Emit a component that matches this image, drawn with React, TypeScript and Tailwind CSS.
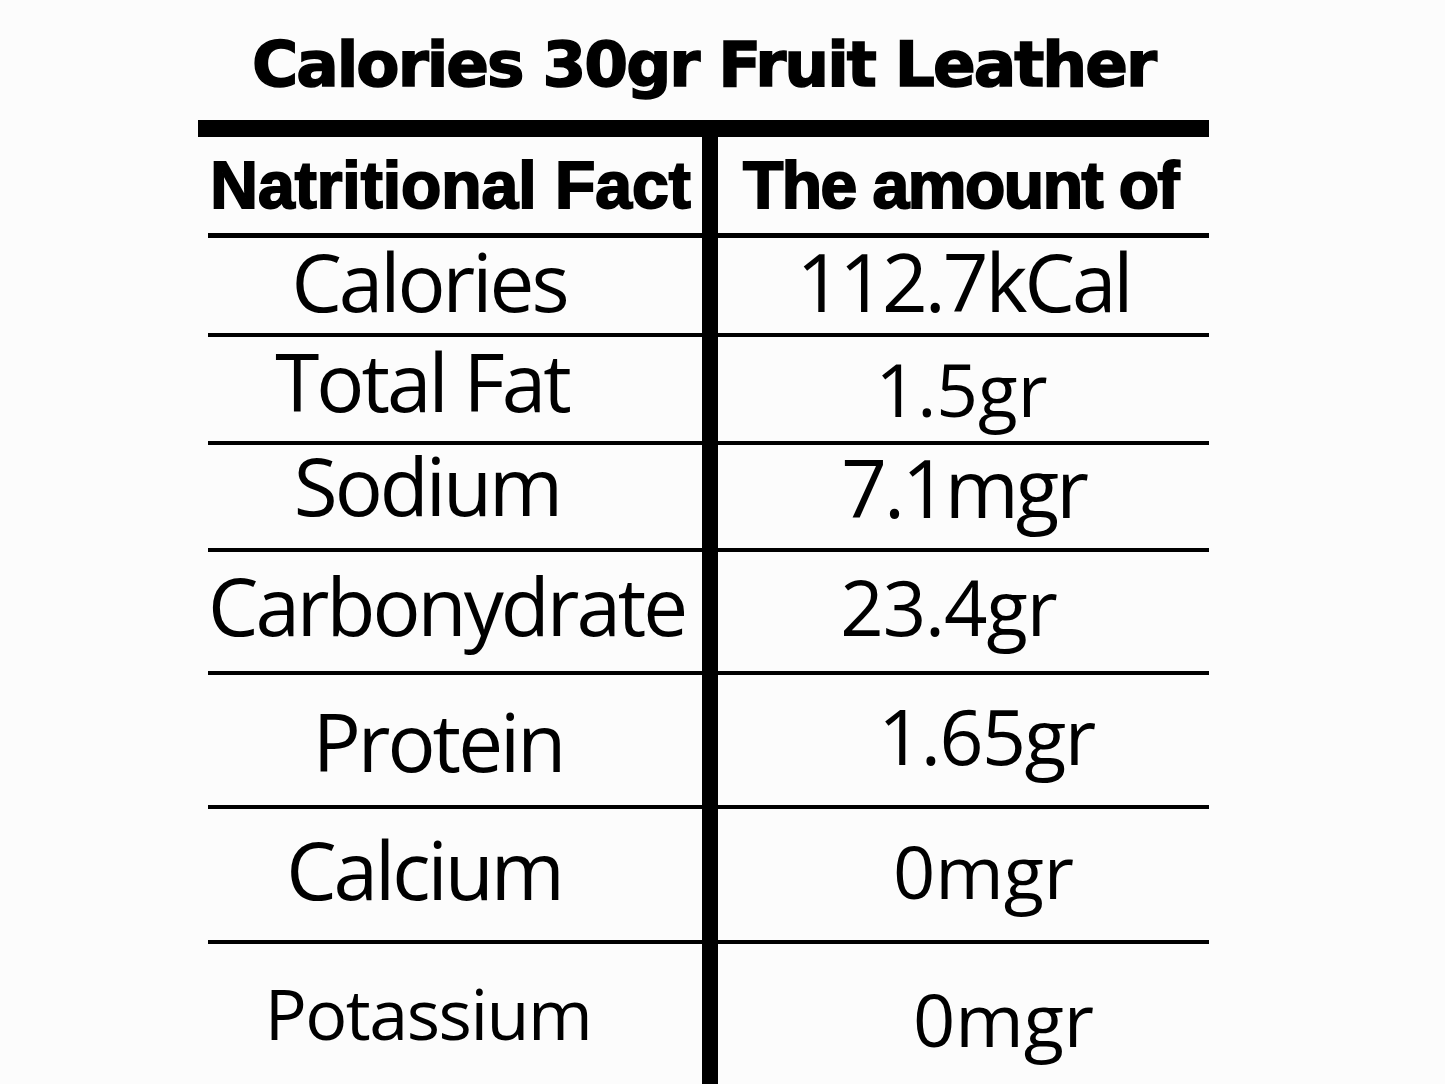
import React from "react";

type Row = {
  label: string;
  value: string;
  h: string;
  lc: string;
  rc: string;
  last?: boolean;
};

const rows: Row[] = [
  { label: "Calories", value: "112.7kCal", h: "h-[99px]", lc: "pt-[3px] pr-[52px] text-[80px] tracking-[-3px]", rc: "pt-[3px] text-[80px] tracking-[-3px]" },
  { label: "Total Fat", value: "1.5gr", h: "h-[108px]", lc: "pt-[4px] pr-[66px] text-[80px] tracking-[-3px]", rc: "pt-[15px] pr-[4px] text-[73px] tracking-[0px]" },
  { label: "Sodium", value: "7.1mgr", h: "h-[107px]", lc: "pt-[0px] pr-[56px] text-[80px] tracking-[-3px]", rc: "pt-[2px] text-[80px] tracking-[-3px]" },
  { label: "Carbonydrate", value: "23.4gr", h: "h-[123px]", lc: "pt-[13px] pr-[18px] text-[80px] tracking-[-3px]", rc: "pt-[17px] pr-[30px] text-[76px] tracking-[-1px]" },
  { label: "Protein", value: "1.65gr", h: "h-[134px]", lc: "pt-[26px] pr-[34px] text-[80px] tracking-[-3px]", rc: "pt-[22px] pl-[46px] text-[77px] tracking-[-1.5px]" },
  { label: "Calcium", value: "0mgr", h: "h-[135px]", lc: "pt-[20px] pr-[62px] text-[80px] tracking-[-3px]", rc: "pt-[25px] pl-[40px] text-[74px] tracking-[0px]" },
  { label: "Potassium", value: "0mgr", h: "h-[140px]", lc: "pt-[34px] pr-[54px] text-[70px] tracking-[-1.5px]", rc: "pt-[38px] pl-[80px] text-[74px] tracking-[0px]", last: true },
];

export default function App() {
  return (
    <div className="w-[1445px] h-[1084px] bg-[#fcfcfc] overflow-hidden text-black">
      <div className="ml-[198px] w-[1011px]">
        <h1 className="h-[120px] pt-[33px] text-center text-[63px] leading-none font-bold tracking-[-2px] font-['DejaVu_Sans',sans-serif] [-webkit-text-stroke:1.5px_black] whitespace-nowrap">
          Calories 30gr Fruit Leather
        </h1>
        <div className="h-[17px] bg-black" />
        <div className="flex pl-[10px]">
          <div className="w-[494px] flex flex-col">
            <div className="h-[101px] border-b-[5px] border-black pt-[15px] pr-[9px] text-center text-[66px] leading-none font-bold tracking-[0px] font-['Liberation_Sans',Arial,sans-serif] [-webkit-text-stroke:2px_black] whitespace-nowrap">
              Natritional Fact
            </div>
            {rows.map((r, i) => (
              <div
                key={i}
                className={`${r.h} ${r.lc} ${r.last ? "" : "border-b-4 border-black"} text-center leading-none font-['Open_Sans',sans-serif] whitespace-nowrap`}
              >
                {r.label}
              </div>
            ))}
          </div>
          <div className="w-[16px] h-[947px] bg-black" />
          <div className="w-[491px] flex flex-col">
            <div className="h-[101px] border-b-[5px] border-black pt-[15px] pr-[6px] text-center text-[66px] leading-none font-bold tracking-[-1.5px] font-['Liberation_Sans',Arial,sans-serif] [-webkit-text-stroke:2px_black] whitespace-nowrap">
              The amount of
            </div>
            {rows.map((r, i) => (
              <div
                key={i}
                className={`${r.h} ${r.rc} ${r.last ? "" : "border-b-4 border-black"} text-center leading-none font-['Open_Sans',sans-serif] whitespace-nowrap`}
              >
                {r.value}
              </div>
            ))}
          </div>
        </div>
      </div>
    </div>
  );
}
